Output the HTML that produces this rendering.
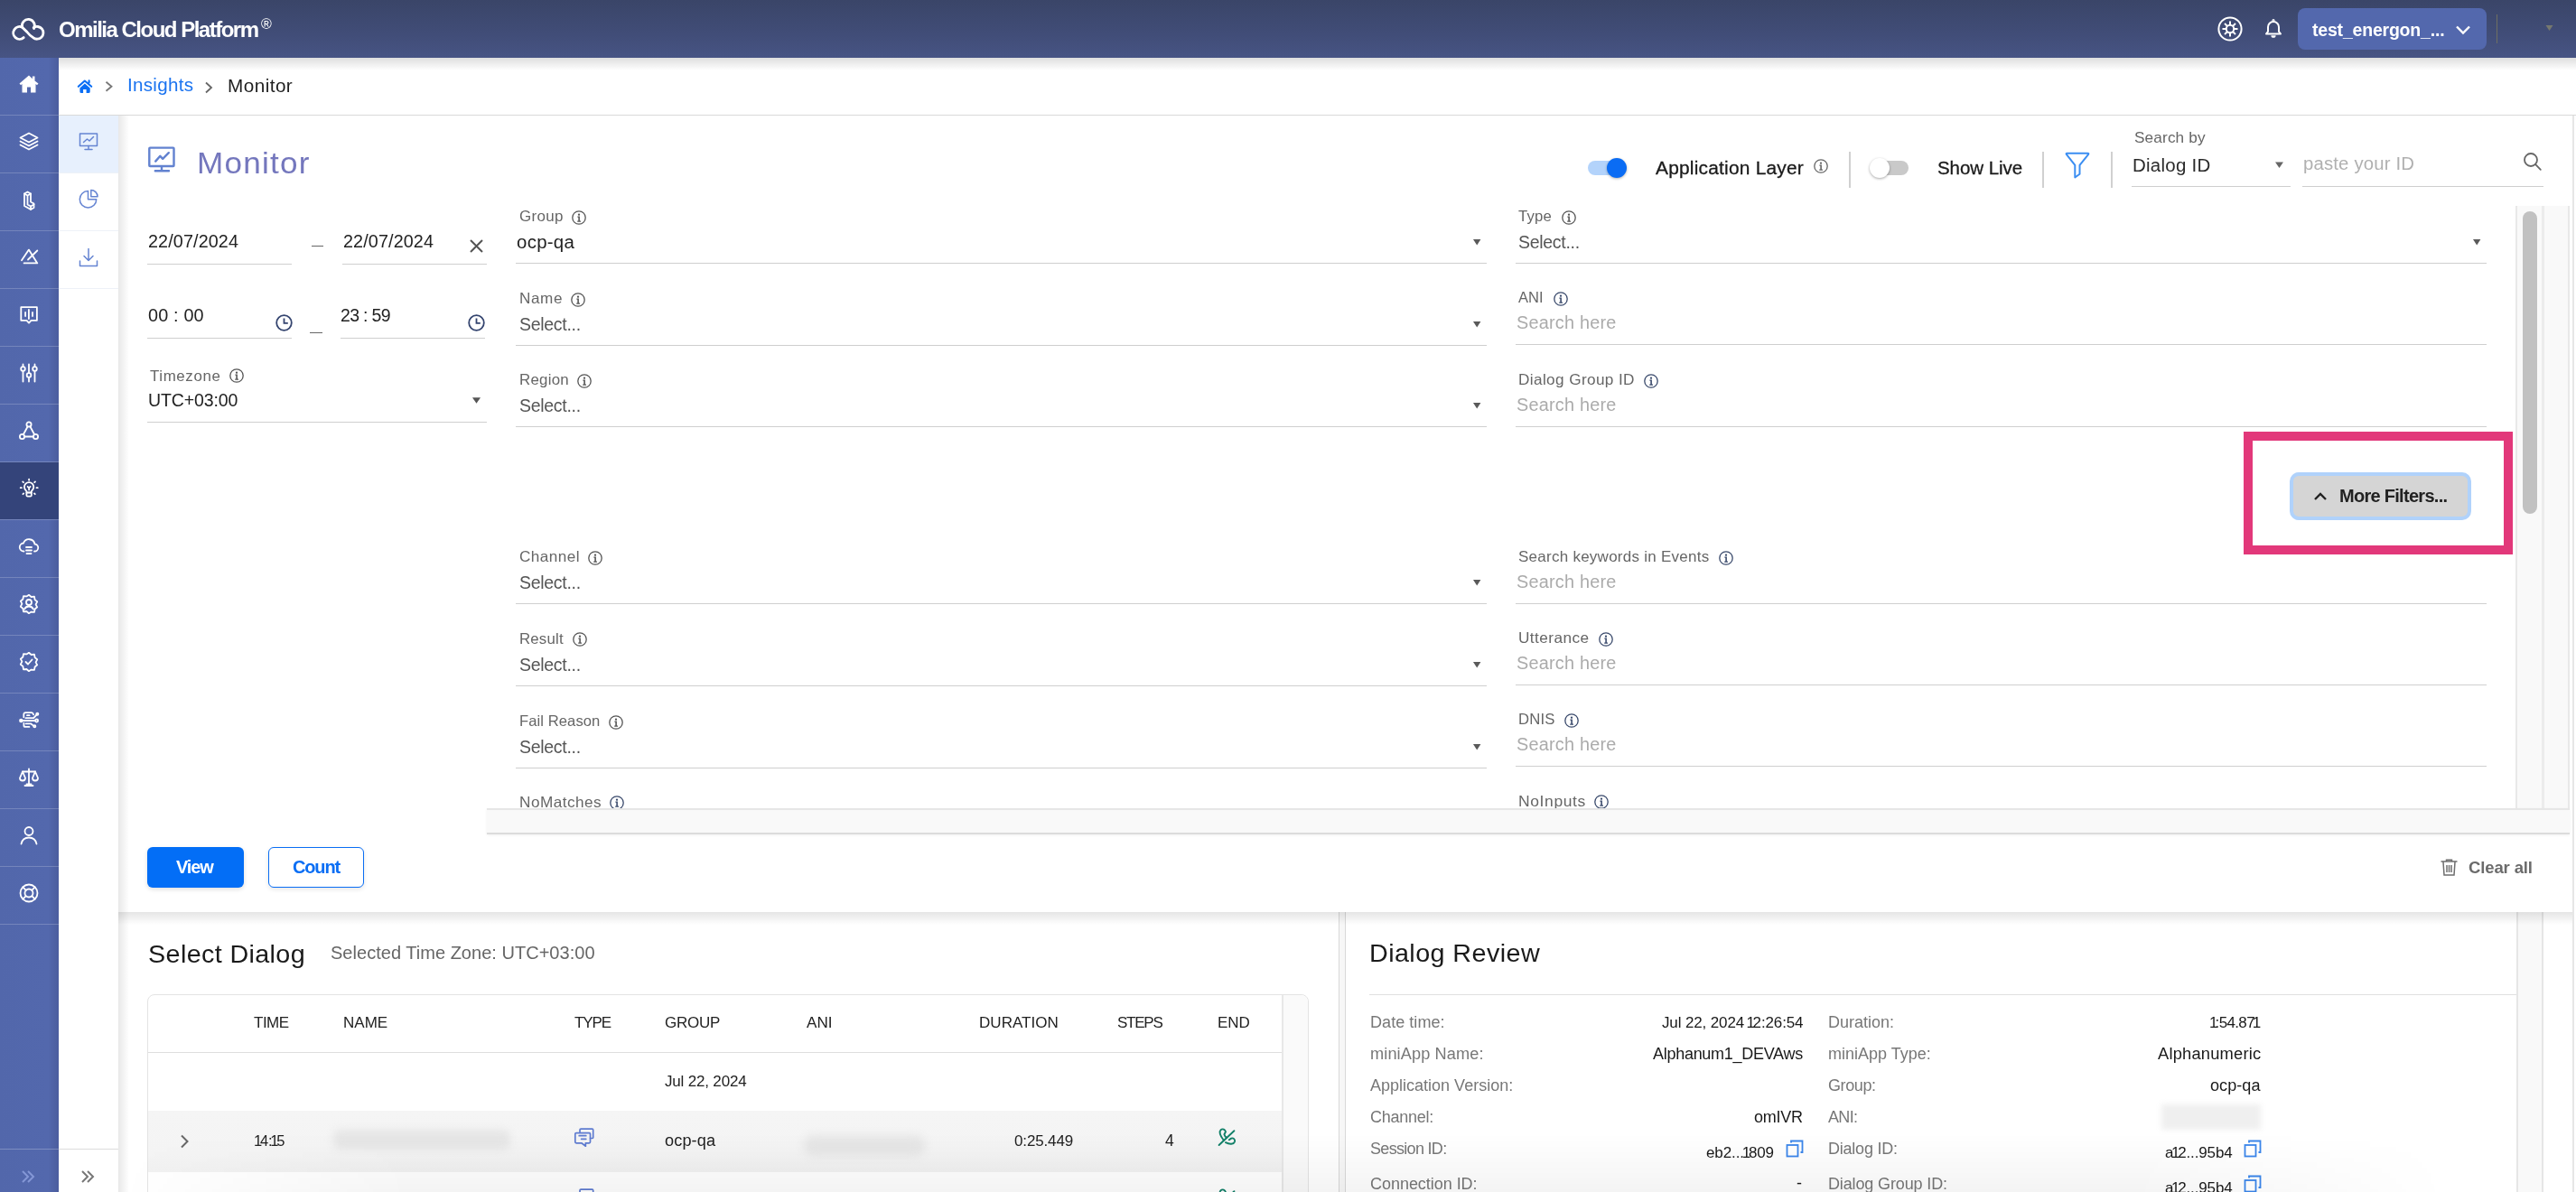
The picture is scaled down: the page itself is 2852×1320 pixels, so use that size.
<!DOCTYPE html>
<html><head><meta charset="utf-8"><title>Monitor</title>
<style>
html,body{margin:0;padding:0;}
body{width:2852px;height:1320px;position:relative;overflow:hidden;background:#fff;font-family:"Liberation Sans",sans-serif;}
.t{position:absolute;white-space:nowrap;will-change:transform;}
.r{position:absolute;}
svg.r{overflow:visible;}
</style></head><body>

<div class="r" style="left:0px;top:0px;width:2852px;height:64px;background:linear-gradient(180deg,#3a4568 0%,#414d78 60%,#475484 100%);"></div>
<div class="r" style="left:65px;top:64px;width:2787px;height:14px;background:linear-gradient(180deg,rgba(0,0,0,0.13),rgba(0,0,0,0));z-index:5;"></div>
<svg class="r" style="left:0px;top:0px;" width="64" height="64" viewBox="0 0 64 64"><g fill="none" stroke="#fff" stroke-width="2.8" stroke-linecap="round"><path d="M26.2 41.6 A6.9 6.9 0 1 1 24.6 30.2 L30 35.5 Q33.5 40 36.6 41.6 A6.9 6.9 0 1 0 37.2 30.6"/><path d="M24.6 30.2 A7.0 7.0 0 1 1 37.6 31.6"/></g></svg>
<div class="t" style="left:65.00px;top:21px;font-size:24px;line-height:24px;color:#fff;letter-spacing:-1.500px;font-weight:700;">Omilia Cloud Platform</div>
<div class="t" style="left:289.00px;top:19px;font-size:16px;line-height:16px;color:#fff;">®</div>
<svg class="r" style="left:2455px;top:18px;" width="28" height="28" viewBox="0 0 28 28"><g fill="none" stroke="#fff" stroke-width="2"><circle cx="14" cy="14" r="12.6"/><circle cx="14" cy="14" r="4.2"/><path d="M14 5.5v4M14 18.5v4M5.5 14h4M18.5 14h4M8 8l2.9 2.9M17.1 17.1L20 20M20 8l-2.9 2.9M10.9 17.1L8 20"/></g></svg>
<svg class="r" style="left:2504px;top:19px;" width="26" height="26" viewBox="0 0 26 26"><g fill="none" stroke="#fff" stroke-width="2" stroke-linejoin="round"><path d="M5 18.5h16l-2-2.6V11a6 6 0 0 0-12 0v4.9z"/><path d="M10.4 20.2h5.2a2.6 2.6 0 0 1-5.2 0z" fill="#fff" stroke="none"/><circle cx="13" cy="3.6" r="0.6"/></g></svg>
<div class="r" style="left:2544px;top:9px;width:209px;height:46px;background:#5368ad;border-radius:8px;"></div>
<div class="t" style="left:2560.00px;top:23.5px;font-size:19.5px;line-height:19.5px;color:#fff;letter-spacing:-0.200px;font-weight:700;">test_energon_...</div>
<svg class="r" style="left:2718px;top:26px;" width="18" height="14" viewBox="0 0 18 14"><path d="M2 3.5l7 7 7-7" fill="none" stroke="#fff" stroke-width="2.4"/></svg>
<div class="r" style="left:2764px;top:16px;width:1px;height:32px;background:#6f6f62;"></div>
<svg class="r" style="left:2818px;top:27px;" width="10" height="8" viewBox="0 0 10 8"><path d="M0.5 1h8l-4 6z" fill="#76786f"/></svg>
<div class="r" style="left:0px;top:64px;width:65px;height:1256px;background:linear-gradient(90deg,#5267ab 0%,#5368ad 82%,#4b5d9e 100%);"></div>
<div class="r" style="left:0px;top:127px;width:65px;height:1px;background:rgba(255,255,255,0.2);"></div>
<div class="r" style="left:0px;top:191px;width:65px;height:1px;background:rgba(255,255,255,0.2);"></div>
<div class="r" style="left:0px;top:255px;width:65px;height:1px;background:rgba(255,255,255,0.2);"></div>
<div class="r" style="left:0px;top:319px;width:65px;height:1px;background:rgba(255,255,255,0.2);"></div>
<div class="r" style="left:0px;top:383px;width:65px;height:1px;background:rgba(255,255,255,0.2);"></div>
<div class="r" style="left:0px;top:447px;width:65px;height:1px;background:rgba(255,255,255,0.2);"></div>
<div class="r" style="left:0px;top:511px;width:65px;height:1px;background:rgba(255,255,255,0.2);"></div>
<div class="r" style="left:0px;top:575px;width:65px;height:1px;background:rgba(255,255,255,0.2);"></div>
<div class="r" style="left:0px;top:639px;width:65px;height:1px;background:rgba(255,255,255,0.2);"></div>
<div class="r" style="left:0px;top:703px;width:65px;height:1px;background:rgba(255,255,255,0.2);"></div>
<div class="r" style="left:0px;top:767px;width:65px;height:1px;background:rgba(255,255,255,0.2);"></div>
<div class="r" style="left:0px;top:831px;width:65px;height:1px;background:rgba(255,255,255,0.2);"></div>
<div class="r" style="left:0px;top:895px;width:65px;height:1px;background:rgba(255,255,255,0.2);"></div>
<div class="r" style="left:0px;top:959px;width:65px;height:1px;background:rgba(255,255,255,0.2);"></div>
<div class="r" style="left:0px;top:1023px;width:65px;height:1px;background:rgba(255,255,255,0.2);"></div>
<div class="r" style="left:0px;top:512px;width:65px;height:63px;background:#34447a;"></div>
<div class="r" style="left:0px;top:1272px;width:65px;height:1px;background:rgba(255,255,255,0.25);"></div>
<svg class="r" style="left:22px;top:1294px;" width="18" height="18" viewBox="0 0 18 18"><g fill="none" stroke="#8497d6" stroke-width="2"><path d="M3 3l6 6-6 6M9 3l6 6-6 6"/></g></svg>
<div class="r" style="left:65px;top:128px;width:66px;height:1192px;background:#fff;"></div>
<div class="r" style="left:65px;top:128px;width:66px;height:63px;background:#e7f0fd;"></div>
<div class="r" style="left:65px;top:191px;width:66px;height:1px;background:#edf1f7;"></div>
<div class="r" style="left:65px;top:255px;width:66px;height:1px;background:#edf1f7;"></div>
<div class="r" style="left:65px;top:319px;width:66px;height:1px;background:#edf1f7;"></div>
<div class="r" style="left:65px;top:1272px;width:66px;height:1px;background:#dcdcdc;"></div>
<svg class="r" style="left:88px;top:1294px;" width="18" height="18" viewBox="0 0 18 18"><g fill="none" stroke="#777" stroke-width="2"><path d="M3 3l6 6-6 6M9 3l6 6-6 6"/></g></svg>
<div class="r" style="left:131px;top:128px;width:12px;height:1192px;background:linear-gradient(90deg,rgba(0,0,0,0.09),rgba(0,0,0,0));z-index:4;"></div>
<div class="r" style="left:65px;top:127px;width:2787px;height:1px;background:#d9d9d9;"></div>
<svg class="r" style="left:78px;top:80px;" width="30" height="30" viewBox="0 0 30 30"><path d="M8.8 15.8L15.8 9.5L23.2 15.8M20.6 11.6V9.4" fill="none" stroke="#0a6ef5" stroke-width="2.1" stroke-linecap="round" stroke-linejoin="round"/><path d="M15.9 12.4L21.7 17.6V21.5Q21.7 23.1 20.1 23.1H17.6V19.1H14.1V23.1H12Q10.4 23.1 10.4 21.5V17.6Z" fill="#0a6ef5"/></svg>
<svg class="r" style="left:114px;top:89px;" width="12" height="14" viewBox="0 0 12 14"><path d="M3.5 1.8l6 5-6 5" fill="none" stroke="#777" stroke-width="1.8"/></svg>
<div class="t" style="left:140.50px;top:84px;font-size:20px;line-height:20px;color:#1a73f0;letter-spacing:0.286px;transform:scaleX(1.0290);transform-origin:0 0;">Insights</div>
<svg class="r" style="left:225px;top:90px;" width="12" height="14" viewBox="0 0 12 14"><path d="M3 1.5l6 5.5-6 5.5" fill="none" stroke="#666" stroke-width="1.8"/></svg>
<div class="t" style="left:252.30px;top:85px;font-size:20px;line-height:20px;color:#1e1e1e;letter-spacing:0.417px;transform:scaleX(1.0373);transform-origin:0 0;">Monitor</div>
<div class="r" style="left:2848px;top:128px;width:2px;height:1192px;background:#e6e6e6;"></div>
<svg class="r" style="left:160px;top:158px;" width="38" height="38" viewBox="0 0 38 38"><g fill="none" stroke="#6282d0" stroke-width="2.4" stroke-linecap="round" stroke-linejoin="round"><rect x="5.3" y="5.6" width="27.2" height="20.4" rx="0.8"/><path d="M12.2 20.6L17.3 14.8L20.2 17.8L26.8 11.2"/><path d="M19 26.2v4.6M11.8 31.2h15.2"/></g></svg>
<div class="t" style="left:217.50px;top:164px;font-size:33px;line-height:33px;color:#7477bd;letter-spacing:1.167px;transform:scaleX(1.0636);transform-origin:0 0;">Monitor</div>
<div class="r" style="left:1758px;top:178px;width:42px;height:16px;background:#b3d3fb;border-radius:8px;"></div>
<div class="r" style="left:1779px;top:175px;width:22px;height:22px;background:#0a6cf4;border-radius:50%;box-shadow:0 1px 3px rgba(0,0,0,0.3);"></div>
<div class="t" style="left:1833.30px;top:176px;font-size:20.5px;line-height:20.5px;color:#1a1a1a;letter-spacing:0.203px;transform:scaleX(1.0207);transform-origin:0 0;-webkit-text-stroke:0.3px #1a1a1a;">Application Layer</div>
<svg class="r" style="left:2008px;top:176px;" width="16" height="16" viewBox="0 0 16 16"><g fill="none" stroke="#666" stroke-width="1.3"><circle cx="8.0" cy="8.0" r="7.2"/></g><g fill="#666"><circle cx="8.0" cy="4.64" r="1.15"/><path d="M6.4 6.6h2.5v4.9h1.1v1.2h-3.8v-1.2h1.1v-3.7h-0.9z"/></g></svg>
<div class="r" style="left:2047px;top:168px;width:2px;height:40px;background:#d0d0d0;"></div>
<div class="r" style="left:2071px;top:178px;width:42px;height:16px;background:#c9c9c9;border-radius:8px;"></div>
<div class="r" style="left:2070px;top:175px;width:22px;height:22px;background:#fff;border-radius:50%;box-shadow:0 1px 3px rgba(0,0,0,0.35);"></div>
<div class="t" style="left:2144.70px;top:176px;font-size:20.5px;line-height:20.5px;color:#1a1a1a;letter-spacing:-0.062px;-webkit-text-stroke:0.3px #1a1a1a;">Show Live</div>
<div class="r" style="left:2261px;top:168px;width:2px;height:40px;background:#d0d0d0;"></div>
<svg class="r" style="left:2285px;top:166px;" width="32" height="34" viewBox="0 0 32 34"><path d="M3.6 3.7H26.3Q28 3.7 27 5.1L17.5 16.9V26.7L12.3 30.5V16.9L3 5.1Q2 3.7 3.6 3.7Z" fill="none" stroke="#3b8ef2" stroke-width="2" stroke-linejoin="round"/></svg>
<div class="r" style="left:2337px;top:168px;width:2px;height:40px;background:#d0d0d0;"></div>
<div class="t" style="left:2363.00px;top:144px;font-size:17px;line-height:17px;color:#666;letter-spacing:0.125px;transform:scaleX(1.0130);transform-origin:0 0;">Search by</div>
<div class="t" style="left:2361.00px;top:173px;font-size:20px;line-height:20px;color:#2a2a2a;letter-spacing:0.250px;transform:scaleX(1.0244);transform-origin:0 0;">Dialog ID</div>
<svg class="r" style="left:2518px;top:178px;" width="12" height="10" viewBox="0 0 12 10"><path d="M1 1.5h9l-4.5 6.5z" fill="#666"/></svg>
<div class="r" style="left:2360px;top:206px;width:176px;height:1px;background:#cfcfcf;"></div>
<div class="t" style="left:2550.00px;top:171px;font-size:20px;line-height:20px;color:#b0b0b0;letter-spacing:0.167px;transform:scaleX(1.0168);transform-origin:0 0;">paste your ID</div>
<svg class="r" style="left:2793px;top:168px;" width="22" height="22" viewBox="0 0 22 22"><g fill="none" stroke="#666" stroke-width="1.8"><circle cx="9" cy="9" r="7"/><path d="M14.2 14.2l5.6 5.6" stroke-linecap="round"/></g></svg>
<div class="r" style="left:2549px;top:206px;width:267px;height:1px;background:#cfcfcf;"></div>
<div class="t" style="left:163.60px;top:258px;font-size:19.5px;line-height:19.5px;color:#222;letter-spacing:0.128px;transform:scaleX(1.0117);transform-origin:0 0;">22/07/2024</div>
<div class="r" style="left:163px;top:292px;width:160px;height:1px;background:#cfcfcf;"></div>
<div class="r" style="left:345px;top:272px;width:13px;height:1px;background:#666;"></div>
<div class="t" style="left:379.50px;top:258px;font-size:19.5px;line-height:19.5px;color:#222;letter-spacing:0.128px;transform:scaleX(1.0117);transform-origin:0 0;">22/07/2024</div>
<svg class="r" style="left:519px;top:264px;" width="17" height="17" viewBox="0 0 17 17"><path d="M2 2l13 13M15 2L2 15" fill="none" stroke="#555" stroke-width="2"/></svg>
<div class="r" style="left:379px;top:292px;width:160px;height:1px;background:#cfcfcf;"></div>
<div class="t" style="left:163.60px;top:340px;font-size:19.5px;line-height:19.5px;color:#222;letter-spacing:0.167px;transform:scaleX(1.0167);transform-origin:0 0;">00 : 00</div>
<svg class="r" style="left:305px;top:348px;" width="19" height="19" viewBox="0 0 19 19"><g fill="none" stroke="#34446f" stroke-width="1.8"><circle cx="9.5" cy="9.5" r="8.3"/><path d="M9.5 4.5v5.3h4.3"/></g></svg>
<div class="r" style="left:163px;top:374px;width:160px;height:1px;background:#cfcfcf;"></div>
<div class="r" style="left:343px;top:368px;width:14px;height:1px;background:#666;"></div>
<div class="t" style="left:376.60px;top:340px;font-size:19.5px;line-height:19.5px;color:#222;letter-spacing:-0.667px;">23 : 59</div>
<svg class="r" style="left:518px;top:348px;" width="19" height="19" viewBox="0 0 19 19"><g fill="none" stroke="#34446f" stroke-width="1.8"><circle cx="9.5" cy="9.5" r="8.3"/><path d="M9.5 4.5v5.3h4.3"/></g></svg>
<div class="r" style="left:377px;top:374px;width:160px;height:1px;background:#cfcfcf;"></div>
<div class="t" style="left:166.20px;top:408.7px;font-size:16px;line-height:16px;color:#666;letter-spacing:0.571px;transform:scaleX(1.0571);transform-origin:0 0;">Timezone</div>
<svg class="r" style="left:253.5px;top:408px;" width="16" height="16" viewBox="0 0 16 16"><g fill="none" stroke="#555" stroke-width="1.3"><circle cx="8.0" cy="8.0" r="7.2"/></g><g fill="#555"><circle cx="8.0" cy="4.64" r="1.15"/><path d="M6.4 6.6h2.5v4.9h1.1v1.2h-3.8v-1.2h1.1v-3.7h-0.9z"/></g></svg>
<div class="t" style="left:164.00px;top:434px;font-size:19.5px;line-height:19.5px;color:#222;letter-spacing:-0.125px;">UTC+03:00</div>
<svg class="r" style="left:522px;top:439px;" width="11" height="9" viewBox="0 0 11 9"><path d="M1 1.2h9l-4.5 6.6z" fill="#555"/></svg>
<div class="r" style="left:163px;top:467px;width:376px;height:1px;background:#cfcfcf;"></div>
<div class="t" style="left:574.50px;top:231.10000000000002px;font-size:16.5px;line-height:16.5px;color:#666;letter-spacing:0.325px;transform:scaleX(1.0283);transform-origin:0 0;">Group</div>
<svg class="r" style="left:633.4px;top:232.5px;" width="16" height="16" viewBox="0 0 16 16"><g fill="none" stroke="#555" stroke-width="1.3"><circle cx="8.0" cy="8.0" r="7.2"/></g><g fill="#555"><circle cx="8.0" cy="4.64" r="1.15"/><path d="M6.4 6.6h2.5v4.9h1.1v1.2h-3.8v-1.2h1.1v-3.7h-0.9z"/></g></svg>
<div class="r" style="left:571px;top:291px;width:1075px;height:1px;background:#cfcfcf;"></div>
<svg class="r" style="left:1629.5px;top:264px;" width="11" height="9" viewBox="0 0 11 9"><path d="M1 1h8.4l-4.2 6.4z" fill="#5a5a5a"/></svg>
<div class="t" style="left:571.80px;top:257.8px;font-size:20px;line-height:20px;color:#222;letter-spacing:0.270px;transform:scaleX(1.0218);transform-origin:0 0;">ocp-qa</div>
<div class="t" style="left:574.50px;top:322.1px;font-size:16.5px;line-height:16.5px;color:#666;letter-spacing:0.567px;transform:scaleX(1.0386);transform-origin:0 0;">Name</div>
<svg class="r" style="left:632.1999999999999px;top:323.5px;" width="16" height="16" viewBox="0 0 16 16"><g fill="none" stroke="#555" stroke-width="1.3"><circle cx="8.0" cy="8.0" r="7.2"/></g><g fill="#555"><circle cx="8.0" cy="4.64" r="1.15"/><path d="M6.4 6.6h2.5v4.9h1.1v1.2h-3.8v-1.2h1.1v-3.7h-0.9z"/></g></svg>
<div class="t" style="left:574.50px;top:350px;font-size:19.5px;line-height:19.5px;color:#555;letter-spacing:-0.300px;">Select...</div>
<div class="r" style="left:571px;top:382px;width:1075px;height:1px;background:#cfcfcf;"></div>
<svg class="r" style="left:1629.5px;top:355px;" width="11" height="9" viewBox="0 0 11 9"><path d="M1 1h8.4l-4.2 6.4z" fill="#5a5a5a"/></svg>
<div class="t" style="left:574.50px;top:412.1px;font-size:16.5px;line-height:16.5px;color:#666;letter-spacing:0.240px;transform:scaleX(1.0231);transform-origin:0 0;">Region</div>
<svg class="r" style="left:639.1999999999999px;top:413.5px;" width="16" height="16" viewBox="0 0 16 16"><g fill="none" stroke="#555" stroke-width="1.3"><circle cx="8.0" cy="8.0" r="7.2"/></g><g fill="#555"><circle cx="8.0" cy="4.64" r="1.15"/><path d="M6.4 6.6h2.5v4.9h1.1v1.2h-3.8v-1.2h1.1v-3.7h-0.9z"/></g></svg>
<div class="t" style="left:574.50px;top:440px;font-size:19.5px;line-height:19.5px;color:#555;letter-spacing:-0.300px;">Select...</div>
<div class="r" style="left:571px;top:472px;width:1075px;height:1px;background:#cfcfcf;"></div>
<svg class="r" style="left:1629.5px;top:445px;" width="11" height="9" viewBox="0 0 11 9"><path d="M1 1h8.4l-4.2 6.4z" fill="#5a5a5a"/></svg>
<div class="t" style="left:574.50px;top:608.0999999999999px;font-size:16.5px;line-height:16.5px;color:#666;letter-spacing:0.417px;transform:scaleX(1.0410);transform-origin:0 0;">Channel</div>
<svg class="r" style="left:650.8px;top:609.5px;" width="16" height="16" viewBox="0 0 16 16"><g fill="none" stroke="#555" stroke-width="1.3"><circle cx="8.0" cy="8.0" r="7.2"/></g><g fill="#555"><circle cx="8.0" cy="4.64" r="1.15"/><path d="M6.4 6.6h2.5v4.9h1.1v1.2h-3.8v-1.2h1.1v-3.7h-0.9z"/></g></svg>
<div class="t" style="left:574.50px;top:636px;font-size:19.5px;line-height:19.5px;color:#555;letter-spacing:-0.300px;">Select...</div>
<div class="r" style="left:571px;top:668px;width:1075px;height:1px;background:#cfcfcf;"></div>
<svg class="r" style="left:1629.5px;top:641px;" width="11" height="9" viewBox="0 0 11 9"><path d="M1 1h8.4l-4.2 6.4z" fill="#5a5a5a"/></svg>
<div class="t" style="left:574.50px;top:698.5999999999999px;font-size:16.5px;line-height:16.5px;color:#666;letter-spacing:0.180px;transform:scaleX(1.0191);transform-origin:0 0;">Result</div>
<svg class="r" style="left:633.5999999999999px;top:700.0px;" width="16" height="16" viewBox="0 0 16 16"><g fill="none" stroke="#555" stroke-width="1.3"><circle cx="8.0" cy="8.0" r="7.2"/></g><g fill="#555"><circle cx="8.0" cy="4.64" r="1.15"/><path d="M6.4 6.6h2.5v4.9h1.1v1.2h-3.8v-1.2h1.1v-3.7h-0.9z"/></g></svg>
<div class="t" style="left:574.50px;top:726.5px;font-size:19.5px;line-height:19.5px;color:#555;letter-spacing:-0.300px;">Select...</div>
<div class="r" style="left:571px;top:758.5px;width:1075px;height:1px;background:#cfcfcf;"></div>
<svg class="r" style="left:1629.5px;top:731.5px;" width="11" height="9" viewBox="0 0 11 9"><path d="M1 1h8.4l-4.2 6.4z" fill="#5a5a5a"/></svg>
<div class="t" style="left:574.50px;top:790.0999999999999px;font-size:16.5px;line-height:16.5px;color:#666;letter-spacing:0.065px;transform:scaleX(1.0074);transform-origin:0 0;">Fail Reason</div>
<svg class="r" style="left:674.0999999999999px;top:791.5px;" width="16" height="16" viewBox="0 0 16 16"><g fill="none" stroke="#555" stroke-width="1.3"><circle cx="8.0" cy="8.0" r="7.2"/></g><g fill="#555"><circle cx="8.0" cy="4.64" r="1.15"/><path d="M6.4 6.6h2.5v4.9h1.1v1.2h-3.8v-1.2h1.1v-3.7h-0.9z"/></g></svg>
<div class="t" style="left:574.50px;top:818px;font-size:19.5px;line-height:19.5px;color:#555;letter-spacing:-0.300px;">Select...</div>
<div class="r" style="left:571px;top:850px;width:1075px;height:1px;background:#cfcfcf;"></div>
<svg class="r" style="left:1629.5px;top:823px;" width="11" height="9" viewBox="0 0 11 9"><path d="M1 1h8.4l-4.2 6.4z" fill="#5a5a5a"/></svg>
<div class="t" style="left:1681.40px;top:231.10000000000002px;font-size:16.5px;line-height:16.5px;color:#666;letter-spacing:0.167px;transform:scaleX(1.0139);transform-origin:0 0;">Type</div>
<svg class="r" style="left:1728.7px;top:232.5px;" width="16" height="16" viewBox="0 0 16 16"><g fill="none" stroke="#555" stroke-width="1.3"><circle cx="8.0" cy="8.0" r="7.2"/></g><g fill="#555"><circle cx="8.0" cy="4.64" r="1.15"/><path d="M6.4 6.6h2.5v4.9h1.1v1.2h-3.8v-1.2h1.1v-3.7h-0.9z"/></g></svg>
<div class="t" style="left:1681.40px;top:259px;font-size:19.5px;line-height:19.5px;color:#555;letter-spacing:-0.300px;">Select...</div>
<div class="r" style="left:1678px;top:291px;width:1075px;height:1px;background:#cfcfcf;"></div>
<svg class="r" style="left:2736.5px;top:264px;" width="11" height="9" viewBox="0 0 11 9"><path d="M1 1h8.4l-4.2 6.4z" fill="#5a5a5a"/></svg>
<div class="t" style="left:1681.40px;top:321.1px;font-size:16.5px;line-height:16.5px;color:#666;">ANI</div>
<svg class="r" style="left:1719.7px;top:322.5px;" width="16" height="16" viewBox="0 0 16 16"><g fill="none" stroke="#3a4a6c" stroke-width="1.3"><circle cx="8.0" cy="8.0" r="7.2"/></g><g fill="#3a4a6c"><circle cx="8.0" cy="4.64" r="1.15"/><path d="M6.4 6.6h2.5v4.9h1.1v1.2h-3.8v-1.2h1.1v-3.7h-0.9z"/></g></svg>
<div class="t" style="left:1678.50px;top:347.5px;font-size:19.5px;line-height:19.5px;color:#ababab;letter-spacing:0.200px;transform:scaleX(1.0189);transform-origin:0 0;">Search here</div>
<div class="r" style="left:1678px;top:381px;width:1075px;height:1px;background:#cfcfcf;"></div>
<div class="t" style="left:1681.40px;top:412.1px;font-size:16.5px;line-height:16.5px;color:#666;letter-spacing:0.357px;transform:scaleX(1.0424);transform-origin:0 0;">Dialog Group ID</div>
<svg class="r" style="left:1819.7px;top:413.5px;" width="16" height="16" viewBox="0 0 16 16"><g fill="none" stroke="#3a4a6c" stroke-width="1.3"><circle cx="8.0" cy="8.0" r="7.2"/></g><g fill="#3a4a6c"><circle cx="8.0" cy="4.64" r="1.15"/><path d="M6.4 6.6h2.5v4.9h1.1v1.2h-3.8v-1.2h1.1v-3.7h-0.9z"/></g></svg>
<div class="t" style="left:1678.50px;top:438.5px;font-size:19.5px;line-height:19.5px;color:#ababab;letter-spacing:0.200px;transform:scaleX(1.0189);transform-origin:0 0;">Search here</div>
<div class="r" style="left:1678px;top:472px;width:1075px;height:1px;background:#cfcfcf;"></div>
<div class="t" style="left:1681.40px;top:608.0999999999999px;font-size:16.5px;line-height:16.5px;color:#666;letter-spacing:0.250px;transform:scaleX(1.0302);transform-origin:0 0;">Search keywords in Events</div>
<svg class="r" style="left:1902.7px;top:609.5px;" width="16" height="16" viewBox="0 0 16 16"><g fill="none" stroke="#3a4a6c" stroke-width="1.3"><circle cx="8.0" cy="8.0" r="7.2"/></g><g fill="#3a4a6c"><circle cx="8.0" cy="4.64" r="1.15"/><path d="M6.4 6.6h2.5v4.9h1.1v1.2h-3.8v-1.2h1.1v-3.7h-0.9z"/></g></svg>
<div class="t" style="left:1678.50px;top:634.5px;font-size:19.5px;line-height:19.5px;color:#ababab;letter-spacing:0.200px;transform:scaleX(1.0189);transform-origin:0 0;">Search here</div>
<div class="r" style="left:1678px;top:668px;width:1075px;height:1px;background:#cfcfcf;"></div>
<div class="t" style="left:1681.40px;top:698.0999999999999px;font-size:16.5px;line-height:16.5px;color:#666;letter-spacing:0.400px;transform:scaleX(1.0444);transform-origin:0 0;">Utterance</div>
<svg class="r" style="left:1770.1000000000001px;top:699.5px;" width="16" height="16" viewBox="0 0 16 16"><g fill="none" stroke="#3a4a6c" stroke-width="1.3"><circle cx="8.0" cy="8.0" r="7.2"/></g><g fill="#3a4a6c"><circle cx="8.0" cy="4.64" r="1.15"/><path d="M6.4 6.6h2.5v4.9h1.1v1.2h-3.8v-1.2h1.1v-3.7h-0.9z"/></g></svg>
<div class="t" style="left:1678.50px;top:724.5px;font-size:19.5px;line-height:19.5px;color:#ababab;letter-spacing:0.200px;transform:scaleX(1.0189);transform-origin:0 0;">Search here</div>
<div class="r" style="left:1678px;top:758px;width:1075px;height:1px;background:#cfcfcf;"></div>
<div class="t" style="left:1681.40px;top:788.0999999999999px;font-size:16.5px;line-height:16.5px;color:#666;letter-spacing:0.167px;transform:scaleX(1.0128);transform-origin:0 0;">DNIS</div>
<svg class="r" style="left:1731.7px;top:789.5px;" width="16" height="16" viewBox="0 0 16 16"><g fill="none" stroke="#3a4a6c" stroke-width="1.3"><circle cx="8.0" cy="8.0" r="7.2"/></g><g fill="#3a4a6c"><circle cx="8.0" cy="4.64" r="1.15"/><path d="M6.4 6.6h2.5v4.9h1.1v1.2h-3.8v-1.2h1.1v-3.7h-0.9z"/></g></svg>
<div class="t" style="left:1678.50px;top:814.5px;font-size:19.5px;line-height:19.5px;color:#ababab;letter-spacing:0.200px;transform:scaleX(1.0189);transform-origin:0 0;">Search here</div>
<div class="r" style="left:1678px;top:848px;width:1075px;height:1px;background:#cfcfcf;"></div>
<div class="r" style="left:539px;top:860px;width:2250px;height:35px;overflow:hidden;">
<div class="t" style="left:36.20px;top:19.600000000000023px;font-size:16.5px;line-height:16.5px;color:#666;letter-spacing:0.438px;transform:scaleX(1.0422);transform-origin:0 0;">NoMatches</div>
<svg class="r" style="left:135.70000000000005px;top:20.5px;" width="16" height="16" viewBox="0 0 16 16"><g fill="none" stroke="#3a4a6c" stroke-width="1.3"><circle cx="8.0" cy="8.0" r="7.2"/></g><g fill="#3a4a6c"><circle cx="8.0" cy="4.64" r="1.15"/><path d="M6.4 6.6h2.5v4.9h1.1v1.2h-3.8v-1.2h1.1v-3.7h-0.9z"/></g></svg>
<div class="t" style="left:1142.40px;top:19.200000000000045px;font-size:16.5px;line-height:16.5px;color:#666;letter-spacing:0.571px;transform:scaleX(1.0606);transform-origin:0 0;">NoInputs</div>
<svg class="r" style="left:1225.9px;top:20px;" width="16" height="16" viewBox="0 0 16 16"><g fill="none" stroke="#3a4a6c" stroke-width="1.3"><circle cx="8.0" cy="8.0" r="7.2"/></g><g fill="#3a4a6c"><circle cx="8.0" cy="4.64" r="1.15"/><path d="M6.4 6.6h2.5v4.9h1.1v1.2h-3.8v-1.2h1.1v-3.7h-0.9z"/></g></svg>
</div>
<div class="r" style="left:2484px;top:478px;width:298px;height:136px;background:transparent;box-sizing:border-box;border:10px solid #e2387a;"></div>
<div class="r" style="left:2535px;top:523px;width:201px;height:53px;background:#d5d5d5;box-sizing:border-box;border:4px solid #b0d2fb;border-radius:10px;"></div>
<svg class="r" style="left:2560px;top:541px;" width="18" height="16" viewBox="0 0 18 16"><path d="M3 12l6-6 6 6" fill="none" stroke="#222" stroke-width="2.4"/></svg>
<div class="t" style="left:2590.00px;top:538.5px;font-size:20px;line-height:20px;color:#222;letter-spacing:-0.714px;font-weight:700;">More Filters...</div>
<div class="r" style="left:2785px;top:228px;width:32px;height:669px;background:#f9f9f9;box-sizing:border-box;border-left:2px solid #e8e8e8;border-right:3px solid #ececec;"></div>
<div class="r" style="left:2793px;top:234px;width:16px;height:335px;background:#c1c1c1;border-radius:8px;"></div>
<div class="r" style="left:2817px;top:228px;width:28px;height:696px;background:#f9f9f9;box-sizing:border-box;border-right:2px solid #e8e8e8;"></div>
<div class="r" style="left:539px;top:895px;width:2306px;height:29px;background:#f9f9f9;box-sizing:border-box;border-top:2px solid #e6e6e6;border-bottom:2px solid #dcdcdc;box-shadow:0 1px 3px rgba(0,0,0,0.06);"></div>
<div class="r" style="left:163px;top:938px;width:107px;height:45px;background:#036ef6;border-radius:6px;box-shadow:0 2px 5px rgba(0,0,0,0.13);"></div>
<div class="t" style="left:195.30px;top:950px;font-size:20px;line-height:20px;color:#fff;letter-spacing:-1.167px;font-weight:700;">View</div>
<div class="r" style="left:297px;top:938px;width:106px;height:45px;background:#fff;box-sizing:border-box;border:1px solid #0a6ef4;border-radius:6px;box-shadow:0 2px 5px rgba(0,0,0,0.10);"></div>
<div class="t" style="left:323.50px;top:950px;font-size:20px;line-height:20px;color:#0a6ef4;letter-spacing:-1.150px;font-weight:700;">Count</div>
<svg class="r" style="left:2701px;top:950px;" width="22" height="22" viewBox="0 0 22 22"><g fill="none" stroke="#6e6e6e" stroke-width="1.5"><path d="M1.5 4h18M7.5 4V2.2h6V4M4 4.5l1 14.5h11l1-14.5M8 8v8M10.5 8v8M13 8v8"/></g></svg>
<div class="t" style="left:2733.00px;top:951.6px;font-size:18.5px;line-height:18.5px;color:#6b6b6b;letter-spacing:-0.125px;font-weight:700;">Clear all</div>
<div class="r" style="left:131px;top:1010px;width:2717px;height:14px;background:linear-gradient(180deg,rgba(0,0,0,0.10),rgba(0,0,0,0));z-index:3;"></div>
<div class="t" style="left:163.80px;top:1042.8px;font-size:28px;line-height:28px;color:#1a1a1a;letter-spacing:0.358px;transform:scaleX(1.0261);transform-origin:0 0;">Select Dialog</div>
<div class="t" style="left:366.30px;top:1044.5px;font-size:20px;line-height:20px;color:#666;letter-spacing:0.013px;transform:scaleX(1.0012);transform-origin:0 0;">Selected Time Zone: UTC+03:00</div>
<div class="r" style="left:163px;top:1101px;width:1286px;height:230px;background:#fff;box-sizing:border-box;border:1px solid #e3e3e3;border-radius:8px;"></div>
<div class="r" style="left:1419px;top:1102px;width:29px;height:220px;background:#fafafa;box-sizing:border-box;border-left:2px solid #e8e8e8;border-top-right-radius:8px;"></div>
<div class="t" style="left:280.80px;top:1124.2px;font-size:17px;line-height:17px;color:#222;letter-spacing:-0.500px;">TIME</div>
<div class="t" style="left:380.20px;top:1124.2px;font-size:17px;line-height:17px;color:#222;letter-spacing:0.017px;transform:scaleX(1.0010);transform-origin:0 0;">NAME</div>
<div class="t" style="left:636.30px;top:1124.2px;font-size:17px;line-height:17px;color:#222;letter-spacing:-1.067px;">TYPE</div>
<div class="t" style="left:736.20px;top:1124.2px;font-size:17px;line-height:17px;color:#222;letter-spacing:-0.250px;">GROUP</div>
<div class="t" style="left:893.00px;top:1124.2px;font-size:17px;line-height:17px;color:#222;letter-spacing:0.050px;transform:scaleX(1.0036);transform-origin:0 0;">ANI</div>
<div class="t" style="left:1084.20px;top:1124.2px;font-size:17px;line-height:17px;color:#222;letter-spacing:0.021px;transform:scaleX(1.0017);transform-origin:0 0;">DURATION</div>
<div class="t" style="left:1237.00px;top:1124.2px;font-size:17px;line-height:17px;color:#222;letter-spacing:-1.250px;">STEPS</div>
<div class="t" style="left:1348.20px;top:1124.2px;font-size:17px;line-height:17px;color:#222;">END</div>
<div class="r" style="left:164px;top:1165px;width:1255px;height:1px;background:#dedede;"></div>
<div class="t" style="left:736.20px;top:1189px;font-size:17px;line-height:17px;color:#222;letter-spacing:-0.182px;">Jul 22, 2024</div>
<div class="r" style="left:164px;top:1230px;width:1255px;height:68px;background:linear-gradient(180deg,#f5f5f5 0%,#f4f4f4 70%,#f1f1f1 100%);"></div>
<svg class="r" style="left:197px;top:1255px;" width="14" height="18" viewBox="0 0 14 18"><path d="M4 2.5l6.5 6.5-6.5 6.5" fill="none" stroke="#666" stroke-width="2"/></svg>
<div class="t" style="left:280.80px;top:1255px;font-size:16.5px;line-height:16.5px;color:#222;letter-spacing:-0.141px;"><span style="letter-spacing:-2.286px">1</span>4<span style="letter-spacing:-2.286px">:</span><span style="letter-spacing:-2.286px">1</span>5</div>
<div class="r" style="left:369px;top:1251px;width:196px;height:22px;background:#e6e6e6;filter:blur(4px);border-radius:8px;"></div>
<svg class="r" style="left:625px;top:1240px;" width="50" height="40" viewBox="0 0 50 40"><g fill="none" stroke="#5e7bd0" stroke-width="1.7" stroke-linejoin="round" stroke-linecap="round"><path d="M17 13.8V11.3Q17 10.2 18.1 10.2H30.6Q31.7 10.2 31.7 11.3V19.4Q31.7 20.5 30.6 20.5H28.6"/><path d="M13 14.6H27.3Q28.5 14.6 28.5 15.8V24.6Q28.5 25.8 27.3 25.8H23.3L23.4 29.2L18.8 25.8H13Q11.8 25.8 11.8 24.6V15.8Q11.8 14.6 13 14.6Z"/><path d="M16.2 17.7H23.8M18.6 21.3H23.8"/></g></svg>
<div class="t" style="left:736.20px;top:1254.1px;font-size:18px;line-height:18px;color:#222;letter-spacing:0.100px;transform:scaleX(1.0089);transform-origin:0 0;">ocp-qa</div>
<div class="r" style="left:890px;top:1257px;width:134px;height:23px;background:#e6e6e6;filter:blur(5px);border-radius:10px;"></div>
<div class="t" style="left:1123.20px;top:1255.2px;font-size:17px;line-height:17px;color:#222;letter-spacing:-0.143px;">0:25.449</div>
<div class="t" style="left:1289.50px;top:1255.2px;font-size:17.5px;line-height:17.5px;color:#222;">4</div>
<svg class="r" style="left:1335px;top:1240px;" width="50" height="40" viewBox="0 0 50 40"><g fill="none" stroke="#128068" stroke-width="1.9" stroke-linecap="round" stroke-linejoin="round"><path d="M14.6 28L31.4 12.2"/><path d="M19.8 22.8C16.2 18 14.6 13.2 16.6 11.2C18.6 9.4 21.3 11 22 13.2L20.4 16.2C20.9 17.8 21.8 19 22.9 19.8"/><path d="M25.8 22.3L28.2 20.6C30.3 19.7 32.8 21.8 32 24.3C30.8 27.3 26.4 27.6 21.9 25.2"/></g></svg>
<svg class="r" style="left:625px;top:1307px;" width="50" height="40" viewBox="0 0 50 40"><g fill="none" stroke="#5e7bd0" stroke-width="1.7" stroke-linejoin="round"><path d="M17 13.8V11.3Q17 10.2 18.1 10.2H30.6Q31.7 10.2 31.7 11.3V19.4Q31.7 20.5 30.6 20.5H28.6"/><path d="M13 14.6H27.3Q28.5 14.6 28.5 15.8V24.6Q28.5 25.8 27.3 25.8H13Q11.8 25.8 11.8 24.6V15.8Q11.8 14.6 13 14.6Z"/></g></svg>
<svg class="r" style="left:1335px;top:1307px;" width="50" height="40" viewBox="0 0 50 40"><g fill="none" stroke="#128068" stroke-width="1.9" stroke-linecap="round"><path d="M14.6 28L31.4 12.2"/><path d="M19.8 22.8C16.2 18 14.6 13.2 16.6 11.2C18.6 9.4 21.3 11 22 13.2"/></g></svg>
<div class="r" style="left:1482px;top:1010px;width:8px;height:310px;background:#f7f7f7;box-sizing:border-box;border-left:1px solid #d8d8d8;border-right:1px solid #d8d8d8;"></div>
<div class="t" style="left:1515.80px;top:1042.1px;font-size:28px;line-height:28px;color:#1a1a1a;letter-spacing:0.400px;transform:scaleX(1.0267);transform-origin:0 0;">Dialog Review</div>
<div class="r" style="left:1516px;top:1101px;width:1270px;height:1px;background:#e0e0e0;"></div>
<div class="r" style="left:2786px;top:1010px;width:30px;height:310px;background:#f9f9f9;box-sizing:border-box;border-left:2px solid #e6e6e6;border-right:2px solid #e6e6e6;"></div>
<div class="t" style="left:1516.80px;top:1123.2px;font-size:18px;line-height:18px;color:#777;letter-spacing:0.028px;transform:scaleX(1.0030);transform-origin:0 0;">Date time:</div>
<div class="t" style="left:2023.70px;top:1123.2px;font-size:18px;line-height:18px;color:#777;">Duration:</div>
<div class="t" style="left:1840.00px;top:1124.2px;font-size:17px;line-height:17px;color:#1a1a1a;letter-spacing:-0.129px;">Jul 22, 2024<span style="letter-spacing:-2.339px"> </span><span style="letter-spacing:-2.339px">1</span>2:26:54</div>
<div class="t" style="left:2446.00px;top:1124.2px;font-size:17px;line-height:17px;color:#1a1a1a;letter-spacing:-0.654px;"><span style="letter-spacing:-2.864px">1</span>:54.8<span style="letter-spacing:-2.864px">7</span>1</div>
<div class="t" style="left:1516.80px;top:1158.3px;font-size:18px;line-height:18px;color:#777;letter-spacing:0.100px;transform:scaleX(1.0098);transform-origin:0 0;">miniApp Name:</div>
<div class="t" style="left:2023.70px;top:1158.3px;font-size:18px;line-height:18px;color:#777;">miniApp Type:</div>
<div class="t" style="left:1830.20px;top:1158.3px;font-size:18px;line-height:18px;color:#1a1a1a;letter-spacing:-0.280px;">Alphanum1_DEVAws</div>
<div class="t" style="left:2389.00px;top:1158.3px;font-size:18px;line-height:18px;color:#1a1a1a;letter-spacing:0.182px;transform:scaleX(1.0182);transform-origin:0 0;">Alphanumeric</div>
<div class="t" style="left:1516.80px;top:1193.2px;font-size:18px;line-height:18px;color:#777;letter-spacing:0.005px;">Application Version:</div>
<div class="t" style="left:2023.70px;top:1193.2px;font-size:18px;line-height:18px;color:#777;letter-spacing:-0.400px;">Group:</div>
<div class="t" style="left:2446.50px;top:1193.2px;font-size:18px;line-height:18px;color:#1a1a1a;letter-spacing:0.050px;transform:scaleX(1.0045);transform-origin:0 0;">ocp-qa</div>
<div class="t" style="left:1516.80px;top:1228.3px;font-size:18px;line-height:18px;color:#777;letter-spacing:-0.257px;">Channel:</div>
<div class="t" style="left:2023.70px;top:1228.3px;font-size:18px;line-height:18px;color:#777;letter-spacing:-0.667px;">ANI:</div>
<div class="t" style="left:1942.00px;top:1228.3px;font-size:18px;line-height:18px;color:#1a1a1a;letter-spacing:-0.250px;">omIVR</div>
<div class="t" style="left:1516.80px;top:1262.9px;font-size:18px;line-height:18px;color:#777;letter-spacing:-0.690px;">Session ID:</div>
<div class="t" style="left:2023.70px;top:1262.9px;font-size:18px;line-height:18px;color:#777;letter-spacing:-0.222px;">Dialog ID:</div>
<div class="t" style="left:1888.70px;top:1267.8000000000002px;font-size:17px;line-height:17px;color:#1a1a1a;letter-spacing:-0.098px;">eb2..<span style="letter-spacing:-2.308px">.</span><span style="letter-spacing:-2.308px">1</span>809</div>
<div class="t" style="left:2396.70px;top:1267.8000000000002px;font-size:17px;line-height:17px;color:#1a1a1a;letter-spacing:-0.142px;"><span style="letter-spacing:-2.352px">a</span><span style="letter-spacing:-2.352px">1</span>2...95b4</div>
<div class="t" style="left:1516.80px;top:1301.9px;font-size:18px;line-height:18px;color:#777;letter-spacing:-0.038px;">Connection ID:</div>
<div class="t" style="left:2023.70px;top:1301.9px;font-size:18px;line-height:18px;color:#777;letter-spacing:-0.133px;">Dialog Group ID:</div>
<div class="t" style="left:1989.40px;top:1301.4px;font-size:18px;line-height:18px;color:#1a1a1a;">-</div>
<div class="t" style="left:2396.70px;top:1306.8000000000002px;font-size:17px;line-height:17px;color:#1a1a1a;letter-spacing:-0.142px;"><span style="letter-spacing:-2.352px">a</span><span style="letter-spacing:-2.352px">1</span>2...95b4</div>
<svg class="r" style="left:1977px;top:1262px;" width="20" height="20" viewBox="0 0 20 20"><g fill="none" stroke="#3b86ea" stroke-width="1.8"><rect x="1.5" y="6" width="12" height="12.5"/><path d="M6 3.5V1.5h12.5V14h-2"/></g></svg>
<svg class="r" style="left:2484px;top:1262px;" width="20" height="20" viewBox="0 0 20 20"><g fill="none" stroke="#3b86ea" stroke-width="1.8"><rect x="1.5" y="6" width="12" height="12.5"/><path d="M6 3.5V1.5h12.5V14h-2"/></g></svg>
<svg class="r" style="left:2484px;top:1301px;" width="20" height="20" viewBox="0 0 20 20"><g fill="none" stroke="#3b86ea" stroke-width="1.8"><rect x="1.5" y="6" width="12" height="12.5"/><path d="M6 3.5V1.5h12.5V14h-2"/></g></svg>
<div class="r" style="left:2393px;top:1223px;width:110px;height:28px;background:#efefef;filter:blur(3px);"></div>
<div class="r" style="left:131px;top:1255px;width:2717px;height:65px;background:linear-gradient(180deg,rgba(0,0,0,0) 0%,rgba(0,0,0,0.045) 100%);z-index:6;-webkit-mask-image:linear-gradient(90deg,transparent 0%,#000 12%,#000 82%,transparent 95%);"></div>
<svg class="r" style="left:19.5px;top:81.0px;" width="24" height="24" viewBox="0 0 24 24"><path d="M12 2.5L1.5 11.6l1.5 1.6L4.5 12v9.5h5.5v-6h4v6h5.5V12l1.5 1.2 1.5-1.6L18.5 8.4V3.5h-2.6v2.7z" fill="#fff"/></svg>
<svg class="r" style="left:19.5px;top:145.0px;" width="24" height="24" viewBox="0 0 24 24"><g fill="none" stroke="#fff" stroke-width="1.8" stroke-linecap="round" stroke-linejoin="round"><path d="M12 2.5l9.5 5-9.5 5-9.5-5z"/><path d="M2.5 11.5l9.5 5 9.5-5"/><path d="M2.5 15.5l9.5 5 9.5-5"/></g></svg>
<svg class="r" style="left:19.5px;top:209.0px;" width="24" height="24" viewBox="0 0 24 24"><g fill="none" stroke="#fff" stroke-width="1.8" stroke-linecap="round" stroke-linejoin="round"><path d="M7 5.5l3.5-2 3.5 2v9l3.5 2v4.5l-3.5 2-7-4z"/><path d="M7 5.5l3.5 2 3.5-2M10.5 7.5v10l3.5 2 3.5-2M14 19.5v3.5"/></g></svg>
<svg class="r" style="left:19.5px;top:273.0px;" width="24" height="24" viewBox="0 0 24 24"><g fill="none" stroke="#fff" stroke-width="1.8" stroke-linecap="round" stroke-linejoin="round"><path d="M4 15.3L11.9 3.6L21.3 18.4H6.6"/><path d="M11 14.5L21.3 4.5"/></g></svg>
<svg class="r" style="left:19.5px;top:337.0px;" width="24" height="24" viewBox="0 0 24 24"><g fill="none" stroke="#fff" stroke-width="1.8" stroke-linecap="round" stroke-linejoin="round"><path d="M3.3 3.2h17.6v14.6h-6.4L12 20.6l-2.5-2.8H3.3z"/><path d="M8.1 9v4M11.9 6v10M16 9v4"/></g></svg>
<svg class="r" style="left:19.5px;top:401.0px;" width="24" height="24" viewBox="0 0 24 24"><g fill="none" stroke="#fff" stroke-width="1.8" stroke-linecap="round" stroke-linejoin="round"><path d="M5.5 2.5v19M12 2.5v19M18.5 2.5v19"/></g><g fill="#5368ad" stroke="#fff" stroke-width="1.8"><circle cx="5.5" cy="7.5" r="2.3"/><circle cx="12" cy="14.5" r="2.3"/><circle cx="18.5" cy="7.5" r="2.3"/></g></svg>
<svg class="r" style="left:19.5px;top:465.0px;" width="24" height="24" viewBox="0 0 24 24"><g fill="none" stroke="#fff" stroke-width="1.8" stroke-linecap="round" stroke-linejoin="round"><circle cx="12" cy="5" r="2.6"/><circle cx="4.5" cy="18.5" r="2.6"/><circle cx="19.5" cy="18.5" r="2.6"/><path d="M10.7 7.3L5.8 16.2M13.3 7.3l4.9 8.9M7.1 18.5h9.8"/></g></svg>
<svg class="r" style="left:19.5px;top:529.0px;" width="24" height="24" viewBox="0 0 24 24"><g fill="none" stroke="#fff" stroke-width="1.8" stroke-linecap="round" stroke-linejoin="round"><path d="M9.4 16.4V15C7.9 13.9 6.9 12.2 6.9 10.3a5.2 5.2 0 0 1 10.4 0c0 1.9-1 3.6-2.5 4.7v1.4z"/><path d="M9.4 16.6h5.4v2.9q0 1.2-1.2 1.2h-3q-1.2 0-1.2-1.2z"/><path d="M10.6 9.8l1.5 1.5 1.5-1.5M12.1 11.3v2.2"/><path d="M12.1 1.6v1.2M5.2 4.4l.8.8M19 4.4l-.8.8M2.7 11.2h1.2M20.5 11.2h1.2M5.4 18.2l.8-.8M18.8 18.2l-.8-.8"/></g></svg>
<svg class="r" style="left:19.5px;top:593.0px;" width="24" height="24" viewBox="0 0 24 24"><g fill="none" stroke="#fff" stroke-width="1.8" stroke-linecap="round" stroke-linejoin="round"><path d="M6.5 17.5a4.5 4.5 0 0 1-.5-9 6.5 6.5 0 0 1 12.5 1 4 4 0 0 1-.5 8"/><path d="M9 13h6M9 16.5h6M9.5 20h5"/></g></svg>
<svg class="r" style="left:19.5px;top:657.0px;" width="24" height="24" viewBox="0 0 24 24"><g fill="none" stroke="#fff" stroke-width="1.8" stroke-linecap="round" stroke-linejoin="round"><path d="M12 1.8l2.6 2.2 3.4-.3.6 3.4 2.6 2.2-1.6 3 1.6 3-2.6 2.2-.6 3.4-3.4-.3L12 22.2l-2.6-2.2-3.4.3-.6-3.4-2.6-2.2 1.6-3-1.6-3 2.6-2.2.6-3.4 3.4.3z"/><circle cx="12" cy="10" r="3"/><path d="M7 17.5c1.2-2.2 3-3 5-3s3.8.8 5 3"/></g></svg>
<svg class="r" style="left:19.5px;top:721.0px;" width="24" height="24" viewBox="0 0 24 24"><g fill="none" stroke="#fff" stroke-width="1.8" stroke-linecap="round" stroke-linejoin="round"><path d="M12 1.8l2.6 2.2 3.4-.3.6 3.4 2.6 2.2-1.6 3 1.6 3-2.6 2.2-.6 3.4-3.4-.3L12 22.2l-2.6-2.2-3.4.3-.6-3.4-2.6-2.2 1.6-3-1.6-3 2.6-2.2.6-3.4 3.4.3z"/><path d="M8.5 12l2.5 2.5 4.5-5"/></g></svg>
<svg class="r" style="left:19.5px;top:785.0px;" width="24" height="24" viewBox="0 0 24 24"><g fill="none" stroke="#fff" stroke-width="1.8" stroke-linecap="round" stroke-linejoin="round"><path d="M6.3 9.3V6.3Q6.3 4.2 8.4 4.2H15Q16.6 4.2 17.1 6.4"/><path d="M10 7.2h2.6"/><path d="M8.4 10.2H17.2L20.2 6.8"/><circle cx="21.3" cy="5.8" r="1.1"/><path d="M5.2 13H19.2"/><circle cx="20.6" cy="13" r="1.5"/><path d="M6.4 15.6V18.2Q6.4 19.9 8.1 19.9H12.4"/><path d="M8.6 16.3H14L17 18.6"/><circle cx="18.3" cy="19.3" r="1.1"/></g><circle cx="3.3" cy="13" r="2.2" fill="#fff"/></svg>
<svg class="r" style="left:19.5px;top:849.0px;" width="24" height="24" viewBox="0 0 24 24"><g fill="none" stroke="#fff" stroke-width="1.8" stroke-linecap="round" stroke-linejoin="round"><path d="M12 2.5v17M5 5.5h14M7.5 21h9M9.5 19.5h5"/><path d="M5 5.5L2 12.5a3 3 0 0 0 6 0z M19 5.5l-3 7a3 3 0 0 0 6 0z"/></g></svg>
<svg class="r" style="left:19.5px;top:913.0px;" width="24" height="24" viewBox="0 0 24 24"><g fill="none" stroke="#fff" stroke-width="1.8" stroke-linecap="round" stroke-linejoin="round"><circle cx="12" cy="7.5" r="4.5"/><path d="M3.5 21.5c1-4.5 4.5-7 8.5-7s7.5 2.5 8.5 7"/></g></svg>
<svg class="r" style="left:19.5px;top:977.0px;" width="24" height="24" viewBox="0 0 24 24"><g fill="none" stroke="#fff" stroke-width="1.8" stroke-linecap="round" stroke-linejoin="round"><circle cx="12" cy="12" r="9.5"/><circle cx="12" cy="12" r="4.5"/><path d="M5.3 5.3l3.5 3.5M15.2 8.8l3.5-3.5M5.3 18.7l3.5-3.5M15.2 15.2l3.5 3.5"/></g></svg>
<svg class="r" style="left:86px;top:145px;" width="24" height="24" viewBox="0 0 24 24"><g fill="none" stroke="#6584d2" stroke-width="1.5" stroke-linecap="round" stroke-linejoin="round"><rect x="2.5" y="3" width="19" height="13.5"/><path d="M6.5 12.5l4-3.5 2.5 2 4.5-4.5M12 16.5v3.5M8 20.5h8"/></g></svg>
<svg class="r" style="left:86px;top:209px;" width="24" height="24" viewBox="0 0 24 24"><g fill="none" stroke="#6584d2" stroke-width="1.5" stroke-linecap="round" stroke-linejoin="round"><path d="M11.5 2.6A9.2 9.2 0 1 0 20.7 11.8H11.5Z"/><path d="M14.8 1.5A7.2 7.2 0 0 1 22 8.7H14.8Z"/></g></svg>
<svg class="r" style="left:86px;top:273px;" width="24" height="24" viewBox="0 0 24 24"><g fill="none" stroke="#6584d2" stroke-width="1.5" stroke-linecap="round" stroke-linejoin="round"><path d="M12 2.5v13M7 10.5l5 5 5-5M2.5 16v5.5h19V16"/></g></svg>
</body></html>
